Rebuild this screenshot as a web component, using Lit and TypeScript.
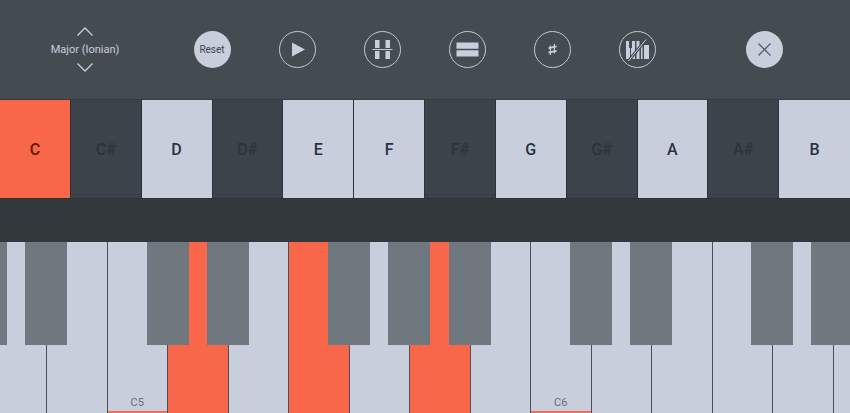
import { LitElement, html, css, svg } from "lit";
import { customElement } from "lit/decorators.js";

const CELLS = [
  ["C", "on"], ["C#", "dark"], ["D", "light"], ["D#", "dark"], ["E", "light"], ["F", "light"],
  ["F#", "dark"], ["G", "light"], ["G#", "dark"], ["A", "light"], ["A#", "dark"], ["B", "light"],
];

const WHITES: { on?: boolean; label?: string }[] = [
  {}, {}, { label: "C5" }, { on: true }, {}, { on: true }, {}, { on: true }, {},
  { label: "C6" }, {}, {}, {}, {}, {},
];

const BLACKS = [-35, 25, 146.5, 207, 328, 388, 448.5, 570, 630, 751, 811];

const ICONS = {
  play: svg`<path d="M13 11.5 L26 18.5 L13 25.5 Z" fill="#c8cedb"/>`,
  split: svg`
    <path d="M11 9h4.5v8h-4.5zM21.500 9h4.500v8h-4.500zM11 20h4.500v8h-4.500zM21.500 20h4.500v8h-4.500z" fill="#c8cedb"/>
    <path d="M8.500 18.500h20" stroke="#c8cedb" stroke-width="1"/>`,
  rows: svg`
    <path d="M7.500 11.500h22v6.200h-22zM7.500 19.300h22v6.200h-22z" fill="#c8cedb"/>`,
  sharp: svg`
    <path d="M16.400 14.500v9.500M20.400 13v9.500" stroke="#c8cedb" stroke-width="1.200" fill="none"/>
    <path d="M14.500 17.200l8-1.800M14.500 21.600l8-1.800" stroke="#c8cedb" stroke-width="1.700" fill="none"/>`,
  piano: svg`
    <path d="M7 10h3v7h1v11H7zM12 17h1V10h3v18h-4zM17.500 10h3v18h-3zM22 15h1.500v13H22zM25 14h5v14h-5z" fill="#c8cedb"/>
    <path d="M9.500 30 L27 8.500" stroke="#454c51" stroke-width="3"/>
    <path d="M9.500 30 L27 8.500" stroke="#c8cedb" stroke-width="1"/>`,
};

@customElement("app-root")
export class AppRoot extends LitElement {
  static styles = css`
    :host {
      display: block;
      width: 850px;
      height: 413px;
      overflow: hidden;
      font-family: Roboto, "Liberation Sans", sans-serif;
      background: #32383b;
    }
    .top {
      height: 99px;
      display: flex;
      align-items: center;
      background: #454c51;
      padding-left: 50px;
      box-sizing: border-box;
    }
    .mode {
      width: 70px;
      display: flex;
      flex-direction: column;
      align-items: center;
      gap: 6px;
      color: #c8cedb;
      font-size: 11px;
      line-height: 13px;
      white-space: nowrap;
      margin-right: 73.5px;
    }
    .mode svg { display: block; }
    .btn {
      width: 37px;
      height: 37px;
      flex: none;
      box-sizing: border-box;
      border-radius: 50%;
      border: 1px solid #c3c8d2;
      margin-right: 48px;
      display: flex;
      align-items: center;
      justify-content: center;
      position: relative;
    }
    .btn svg { position: absolute; left: -1px; top: -1px; display: block; }
    .btn.solid { background: #c8cedb; border: 0; color: #3c434a; font-size: 10px; }
    .btn.solid svg { left: 0; top: 0; }
    .btn.close { margin-left: 42px; margin-right: 0; }
    .cells {
      height: 100px;
      display: grid;
      grid-template-columns: repeat(12, 1fr);
      background: #2c3236;
      box-sizing: border-box;
      border-top: 1px solid #353b40;
      border-bottom: 1px solid #2c3236;
    }
    .cell {
      display: flex;
      align-items: center;
      justify-content: center;
      font-size: 16px;
      font-weight: 500;
      box-sizing: border-box;
      border-right: 1px solid #2c3236;
    }
    .cell:last-child { border-right: 0; }
    .cell.on { background: #f9674a; color: #5c1a10; }
    .cell.dark { background: #3c434a; color: #2d343c; }
    .cell.light { background: #c8cedb; color: #2a3242; }
    .strip { height: 43px; background: #32383b; }
    .piano {
      position: relative;
      height: 171px;
      background: #c8cedb;
      overflow: hidden;
    }
    .whites {
      display: flex;
      margin-left: -13.5px;
      height: 100%;
    }
    .white {
      flex: none;
      width: 60.5px;
      box-sizing: border-box;
      border-right: 1px solid #4b5158;
      background: #c8cedb;
      display: flex;
      flex-direction: column;
      align-items: center;
      justify-content: flex-end;
      color: #697079;
      font-size: 11px;
      line-height: 13px;
    }
    .white.on { background: #f9674a; }
    .white .mark {
      align-self: stretch;
      height: 2.500px;
      margin-top: 2px;
      background: #f0705a;
    }
    .black {
      position: absolute;
      top: 0;
      width: 42px;
      height: 103px;
      background: #6f777f;
    }
  `;

  render() {
    return html`
      <div class="top">
        <div class="mode">
          <svg width="18" height="11" viewBox="0 0 18 11"><path d="M1.500 9.500L9 2l7.500 7.500" fill="none" stroke="#c8cedb" stroke-width="1.300"/></svg>
          <span>Major (Ionian)</span>
          <svg width="18" height="11" viewBox="0 0 18 11"><path d="M1.500 1.500L9 9l7.500-7.500" fill="none" stroke="#c8cedb" stroke-width="1.300"/></svg>
        </div>
        <div class="btn solid">Reset</div>
        ${[ICONS.play, ICONS.split, ICONS.rows, ICONS.sharp, ICONS.piano].map(
          (i) => html`<div class="btn"><svg width="37" height="37" viewBox="0 0 37 37">${i}</svg></div>`
        )}
        <div class="btn solid close">
          <svg width="37" height="37" viewBox="0 0 37 37"><path d="M12.500 12.500l12 12M24.500 12.500l-12 12" stroke="#596068" stroke-width="1.300" fill="none"/></svg>
        </div>
      </div>
      <div class="cells">
        ${CELLS.map(([n, k]) => html`<div class="cell ${k}">${n}</div>`)}
      </div>
      <div class="strip"></div>
      <div class="piano">
        <div class="whites">
          ${WHITES.map(
            (w) => html`<div class="white ${w.on ? "on" : ""}">
              ${w.label ? html`<span>${w.label}</span><div class="mark"></div>` : ""}
            </div>`
          )}
        </div>
        ${BLACKS.map((x) => html`<div class="black" style="left:${x}px"></div>`)}
      </div>
    `;
  }
}
